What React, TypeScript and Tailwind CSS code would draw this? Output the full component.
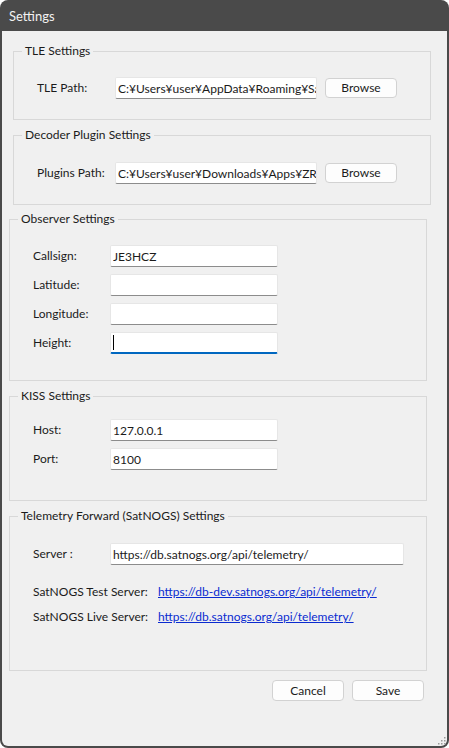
import React from 'react';

const font = { fontFamily: 'Lato, "Noto Sans", sans-serif' };

const GroupBox: React.FC<{ title: string; className: string; children: React.ReactNode }> = ({ title, className, children }) => (
    <fieldset className={`w-[418px] border border-[#d8d8d8] ${className}`}>
        <legend className="ml-[8px] px-[3px] text-[12px] leading-[16px] text-[#1b1b1b]">{title}</legend>
        {children}
    </fieldset>
);

const TextBox: React.FC<{ value?: string; width: string }> = ({ value = '', width }) => (
    <input
        readOnly
        value={value}
        className={`${width} h-[22px] bg-white border border-[#e6e6e6] border-b-[#8c8c8c] rounded-[2px] pl-[2px] text-[12px] text-[#1b1b1b] outline-none`}
        style={font}
    />
);

const Button: React.FC<{ label: string; className?: string }> = ({ label, className = '' }) => (
    <button className={`w-[72px] h-[20px] bg-[#fdfdfd] border border-[#d2d2d2] rounded-[4px] text-[12px] leading-none text-[#1b1b1b] ${className}`}>
        {label}
    </button>
);

const Row: React.FC<{ label: string; labelWidth: string; children: React.ReactNode }> = ({ label, labelWidth, children }) => (
    <div className="flex items-center h-[22px]">
        <span className={`${labelWidth} text-[12px] leading-[16px] text-[#1b1b1b]`}>{label}</span>
        {children}
    </div>
);

const App: React.FC = () => {
    return (
        <div className="w-[449px] h-[748px] bg-white leading-[16px]" style={font}>
            <div className="relative w-full h-full flex flex-col rounded-[8px] overflow-hidden bg-[#4a4a4a]">
                <div className="h-[31px] flex items-center pl-[9px] text-[13px] text-[#f2f2f2] shrink-0">Settings</div>
                <div className="flex-1 mx-[2px] mb-[2px] bg-[#f0f0f0] rounded-b-[6px] flex flex-col">
                    <GroupBox title="TLE Settings" className="mt-[12px] ml-[11px]">
                        <div className="pl-[23px] pt-[18px] pb-[20px]">
                            <Row label="TLE Path:" labelWidth="w-[78px]">
                                <TextBox width="w-[202px]" value="C:¥Users¥user¥AppData¥Roaming¥SatNOGS¥tle.txt" />
                                <Button label="Browse" className="ml-[8px]" />
                            </Row>
                        </div>
                    </GroupBox>

                    <GroupBox title="Decoder Plugin Settings" className="mt-[7px] ml-[11px]">
                        <div className="pl-[23px] pt-[19px] pb-[20px]">
                            <Row label="Plugins Path:" labelWidth="w-[78px]">
                                <TextBox width="w-[202px]" value="C:¥Users¥user¥Downloads¥Apps¥ZR6TG¥plugins" />
                                <Button label="Browse" className="ml-[8px]" />
                            </Row>
                        </div>
                    </GroupBox>

                    <GroupBox title="Observer Settings" className="mt-[6px] ml-[7px]">
                        <div className="pl-[23px] pt-[18px] pb-[26px] flex flex-col gap-[7px]">
                            <Row label="Callsign:" labelWidth="w-[77px]">
                                <TextBox width="w-[168px]" value="JE3HCZ" />
                            </Row>
                            <Row label="Latitude:" labelWidth="w-[77px]">
                                <TextBox width="w-[168px]" />
                            </Row>
                            <Row label="Longitude:" labelWidth="w-[77px]">
                                <TextBox width="w-[168px]" />
                            </Row>
                            <Row label="Height:" labelWidth="w-[77px]">
                                <div className="w-[168px] h-[22px] bg-white border border-[#e6e6e6] border-b-2 border-b-[#0067c0] rounded-[2px] flex items-center pl-[2px]">
                                    <span className="w-[1px] h-[15px] bg-black" />
                                </div>
                            </Row>
                        </div>
                    </GroupBox>

                    <GroupBox title="KISS Settings" className="mt-[7px] ml-[7px]">
                        <div className="pl-[23px] pt-[15px] pb-[30px] flex flex-col gap-[7px]">
                            <Row label="Host:" labelWidth="w-[77px]">
                                <TextBox width="w-[168px]" value="127.0.0.1" />
                            </Row>
                            <Row label="Port:" labelWidth="w-[77px]">
                                <TextBox width="w-[168px]" value="8100" />
                            </Row>
                        </div>
                    </GroupBox>

                    <GroupBox title="Telemetry Forward (SatNOGS) Settings" className="mt-[7px] ml-[7px]">
                        <div className="pl-[23px] pt-[19px] pb-[45px] flex flex-col">
                            <Row label="Server :" labelWidth="w-[77px]">
                                <TextBox width="w-[294px]" value="https://db.satnogs.org/api/telemetry/" />
                            </Row>
                            <div className="mt-[19px] flex items-center h-[16px]">
                                <span className="w-[125px] text-[12px] text-[#1b1b1b]">SatNOGS Test Server:</span>
                                <a className="text-[12px] text-[#0a2bd0] underline">https://db-dev.satnogs.org/api/telemetry/</a>
                            </div>
                            <div className="mt-[9px] flex items-center h-[16px]">
                                <span className="w-[125px] text-[12px] text-[#1b1b1b]">SatNOGS Live Server:</span>
                                <a className="text-[12px] text-[#0a2bd0] underline">https://db.satnogs.org/api/telemetry/</a>
                            </div>
                        </div>
                    </GroupBox>

                    <div className="mt-[9px] flex justify-end gap-[8px] pr-[23px]">
                        <Button label="Cancel" className="h-[21px]" />
                        <Button label="Save" className="h-[21px]" />
                    </div>
                </div>

                {/* resize grip */}
                <svg className="absolute right-[3px] bottom-[3px]" width="10" height="10" viewBox="0 0 10 10">
                    {[[8, 2], [8, 5], [5, 5], [8, 8], [5, 8], [2, 8]].map(([x, y]) => (
                        <rect key={`${x}-${y}`} x={x} y={y} width="1.5" height="1.5" fill="#9a9a9a" />
                    ))}
                </svg>
            </div>
        </div>
    );
};

export default App;
